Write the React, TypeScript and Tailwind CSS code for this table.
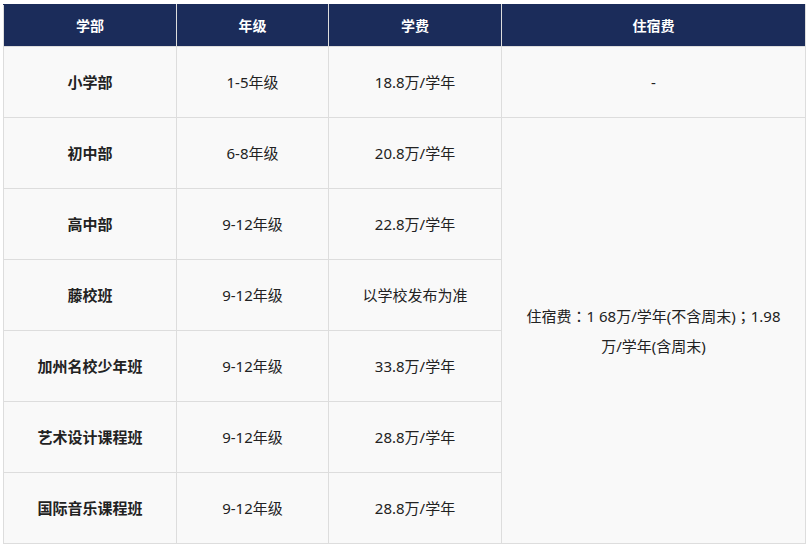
import React from 'react';

const rows = [
  { dept: '小学部', grade: '1-5年级', fee: '18.8万/学年' },
  { dept: '初中部', grade: '6-8年级', fee: '20.8万/学年' },
  { dept: '高中部', grade: '9-12年级', fee: '22.8万/学年' },
  { dept: '藤校班', grade: '9-12年级', fee: '以学校发布为准' },
  { dept: '加州名校少年班', grade: '9-12年级', fee: '33.8万/学年' },
  { dept: '艺术设计课程班', grade: '9-12年级', fee: '28.8万/学年' },
  { dept: '国际音乐课程班', grade: '9-12年级', fee: '28.8万/学年' },
];

const font = { fontFamily: '"Noto Sans", "Noto Sans CJK SC", sans-serif' };
// centred full-width punctuation, as in the original rendering
const punct = { fontFamily: '"Noto Sans CJK TC", sans-serif' };

export default function App() {
  return (
    <div className="bg-white w-[807px] h-[548px] pt-[4px] pl-[3px]" style={font}>
      <table className="border-collapse table-fixed w-[802px] text-[15px] text-[#222]">
        <colgroup>
          <col className="w-[173px]" />
          <col className="w-[152px]" />
          <col className="w-[173px]" />
          <col className="w-[304px]" />
        </colgroup>
        <thead>
          <tr className="h-[42px] bg-[#1b2c5a] text-white font-bold text-[14px]">
            <th className="border border-[#dddddd] border-t-[#1b2c5a]">学部</th>
            <th className="border border-[#dddddd] border-t-[#1b2c5a]">年级</th>
            <th className="border border-[#dddddd] border-t-[#1b2c5a]">学费</th>
            <th className="border border-[#dddddd] border-t-[#1b2c5a]">住宿费</th>
          </tr>
        </thead>
        <tbody className="bg-[#f9f9f9]">
          {rows.map((r, i) => (
            <tr key={r.dept} className="h-[71px]">
              <td className="border border-[#dddddd] text-center font-bold">{r.dept}</td>
              <td className="border border-[#dddddd] text-center">{r.grade}</td>
              <td className="border border-[#dddddd] text-center">{r.fee}</td>
              {i === 0 && <td className="border border-[#dddddd] text-center">-</td>}
              {i === 1 && (
                <td rowSpan={6} className="border border-[#dddddd] text-center px-[12px] leading-[30px]">
                  住宿费<span style={punct}>：</span>1 68万/学年(不含周末)<span style={punct}>；</span>1.98
                  <br />
                  万/学年(含周末)
                </td>
              )}
            </tr>
          ))}
        </tbody>
      </table>
    </div>
  );
}
